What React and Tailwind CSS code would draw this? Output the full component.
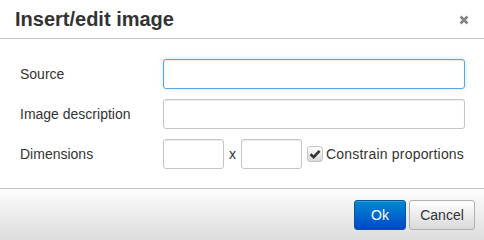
function Field({ label, children }) {
  return (
    <div className="flex items-center h-[30px]">
      <label className="w-[143px] text-[14px] text-[#333]">{label}</label>
      {children}
    </div>
  );
}

export default function App() {
  return (
    <div
      className="w-[484px] h-[240px] bg-white flex flex-col overflow-hidden"
      style={{ fontFamily: '"Liberation Sans", Arial, sans-serif' }}
    >
      {/* Head */}
      <div className="h-[39px] shrink-0 border-b border-[#c5c5c5] flex items-center justify-between pl-[15px] pr-[15px]">
        <h1 className="text-[20px] font-bold text-[#333] leading-none">Insert/edit image</h1>
        <svg width="10" height="10" viewBox="0 0 10 10" className="mt-[1px]">
          <path d="M1.5 1.5 L8.5 8.5 M8.5 1.5 L1.5 8.5" stroke="#858585" strokeWidth="2.6" />
        </svg>
      </div>

      {/* Body */}
      <div className="flex-1 flex flex-col gap-[10px] pl-[20px] pt-[20px]">
        <Field label="Source">
          <input className="w-[302px] h-[30px] rounded-[3px] border border-[#59a5e5] shadow-[inset_0_1px_2px_rgba(0,0,0,0.1),0_0_4px_rgba(89,165,229,0.35)] outline-none" />
        </Field>
        <Field label="Image description">
          <input className="w-[302px] h-[30px] rounded-[3px] border border-[#c5c5c5] shadow-[inset_0_1px_1px_rgba(0,0,0,0.08)] outline-none" />
        </Field>
        <Field label="Dimensions">
          <input className="w-[61px] h-[30px] rounded-[3px] border border-[#c5c5c5] shadow-[inset_0_1px_1px_rgba(0,0,0,0.08)] outline-none" />
          <span className="w-[17px] text-center text-[14px] text-[#333]">x</span>
          <input className="w-[61px] h-[30px] rounded-[3px] border border-[#c5c5c5] shadow-[inset_0_1px_1px_rgba(0,0,0,0.08)] outline-none" />
          <div className="ml-[5px] flex items-center gap-[3px]">
            <span className="w-[16px] h-[16px] rounded-[3px] border border-[#c5c5c5] bg-gradient-to-b from-[#fff] to-[#d9d9d9] flex items-center justify-center">
              <svg width="12" height="12" viewBox="0 0 12 12">
                <path d="M1.5 6.2 L4.6 9.2 L10.6 2.8" fill="none" stroke="#333" strokeWidth="2.6" />
              </svg>
            </span>
            <span className="text-[14px] text-[#333] tracking-[0.2px]">Constrain proportions</span>
          </div>
        </Field>
      </div>

      {/* Foot */}
      <div className="h-[52px] shrink-0 border-t border-[#c5c5c5] bg-gradient-to-b from-[#fdfdfd] to-[#dddddd] flex items-start justify-end gap-[3px] pt-[11px] pr-[9px]">
        <button className="w-[52px] h-[30px] rounded-[3px] border border-[#0b5394] bg-gradient-to-b from-[#0088cc] to-[#0044cc] text-white text-[14px] shadow-[inset_0_1px_0_rgba(255,255,255,0.2)]">
          Ok
        </button>
        <button className="w-[66px] h-[30px] rounded-[3px] border border-[#b1b1b1] bg-gradient-to-b from-[#ffffff] to-[#d9d9d9] text-[#333] text-[14px]">
          Cancel
        </button>
      </div>
    </div>
  );
}
